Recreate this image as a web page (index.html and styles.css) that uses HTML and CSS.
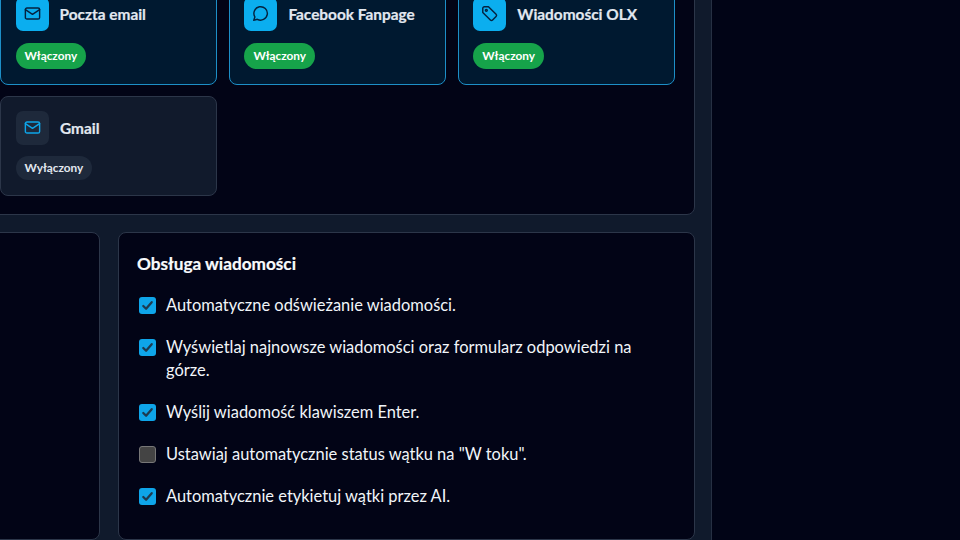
FILE: index.html
```html
<!DOCTYPE html>
<html lang="pl">
<head>
<meta charset="utf-8">
<title>Ustawienia</title>
<link rel="stylesheet" href="styles.css">
</head>
<body>
<main class="main">
  <section class="panel channels">
    <article class="card on">
      <div class="card-head">
        <span class="icon"><svg viewBox="0 0 24 24"><rect x="3" y="5" width="18" height="14" rx="2"/><path d="M3 7l9 6 9-6"/></svg></span>
        <h3>Poczta email</h3>
      </div>
      <span class="badge">Włączony</span>
    </article>
    <article class="card on">
      <div class="card-head">
        <span class="icon"><svg viewBox="0 0 24 24"><path d="M3.5 20.5l1.4-4.2A8.5 8.5 0 1 1 8 19.3z"/></svg></span>
        <h3>Facebook Fanpage</h3>
      </div>
      <span class="badge">Włączony</span>
    </article>
    <article class="card on">
      <div class="card-head">
        <span class="icon"><svg viewBox="0 0 24 24"><path d="M3.5 5.5a2 2 0 0 1 2-2h5.2l9.6 9.6a2 2 0 0 1 0 2.8l-4.4 4.4a2 2 0 0 1-2.8 0L3.5 10.7z"/><circle cx="8" cy="8" r="1.2"/></svg></span>
        <h3>Wiadomości OLX</h3>
      </div>
      <span class="badge">Włączony</span>
    </article>
    <article class="card off">
      <div class="card-head">
        <span class="icon"><svg viewBox="0 0 24 24"><rect x="3" y="5" width="18" height="14" rx="2"/><path d="M3 7l9 6 9-6"/></svg></span>
        <h3>Gmail</h3>
      </div>
      <span class="badge">Wyłączony</span>
    </article>
  </section>
  <div class="lower">
    <section class="panel side"></section>
    <section class="panel options">
      <h2>Obsługa wiadomości</h2>
      <ul class="opts">
        <li><span class="box checked"><svg viewBox="0 0 16 16"><path d="M3.5 8.5l3 3 6-7"/></svg></span><span>Automatyczne odświeżanie wiadomości.</span></li>
        <li><span class="box checked"><svg viewBox="0 0 16 16"><path d="M3.5 8.5l3 3 6-7"/></svg></span><span>Wyświetlaj najnowsze wiadomości oraz formularz odpowiedzi na górze.</span></li>
        <li><span class="box checked"><svg viewBox="0 0 16 16"><path d="M3.5 8.5l3 3 6-7"/></svg></span><span>Wyślij wiadomość klawiszem Enter.</span></li>
        <li><span class="box"></span><span>Ustawiaj automatycznie status wątku na "W toku".</span></li>
        <li><span class="box checked"><svg viewBox="0 0 16 16"><path d="M3.5 8.5l3 3 6-7"/></svg></span><span>Automatycznie etykietuj wątki przez AI.</span></li>
      </ul>
    </section>
  </div>
</main>
</body>
</html>
```

FILE: styles.css
```css
* { box-sizing: border-box; }
html, body { margin: 0; height: 540px; overflow: hidden; }
body {
  background: #010416;
  font-family: "Lato", "Noto Sans", sans-serif;
  color: #f1f5f9;
}
.main {
  width: 752px;
  height: 600px;
  margin: -60px 0 0 -40px;
  padding: 0 16.5px 0 21px;
  background: #101a2c;
  border-right: 1px solid #263043;
}
.panel {
  background: #020416;
  border: 1px solid #2c3649;
  border-radius: 8px;
}
.channels {
  display: grid;
  grid-template-columns: repeat(3, 217.3px);
  column-gap: 11.6px;
  row-gap: 11px;
  align-content: start;
  height: 274.5px;
  padding: 40px 0 0 18px;
}
.card {
  display: flex;
  flex-direction: column;
  align-items: flex-start;
  border-radius: 8px;
  padding: 14px 15px 15px;
}
.card.on { height: 104px; padding: 15px 15px 15px 14.5px; background: #001930; border: 1.5px solid #1d8fc7; }
.card.off { height: 100px; background: #111a2c; border: 1px solid #2c3649; }
.card-head { display: flex; align-items: center; gap: 11px; }
.card h3 { margin: 0; font-size: 15.4px; font-weight: 700; color: #e2e8f0; -webkit-text-stroke: 0.2px #e2e8f0; }
.icon {
  width: 33px; height: 33.5px; flex: none;
  display: flex; align-items: center; justify-content: center;
  border-radius: 7px;
}
.icon svg { width: 19px; height: 19px; fill: none; stroke-width: 1.8; stroke-linecap: round; stroke-linejoin: round; }
.on .icon { background: #0baeef; }
.on .icon svg { stroke: #04223f; }
.off .icon { background: #1e293b; }
.off .icon svg { stroke: #0ea5e9; }
.badge {
  display: inline-flex; align-items: center;
  font-size: 11.8px; font-weight: 700;
  border-radius: 13px;
}
.on .badge { height: 26px; padding: 0 9px; margin-top: 12px; background: #16a34a; color: #fff; }
.off .badge { height: 24px; padding: 0 8.5px; margin-top: 11px; background: #1e293b; color: #e2e8f0; }
.lower {
  display: grid;
  grid-template-columns: 1fr 577px;
  gap: 17.5px;
  margin-top: 17.5px;
  height: 308px;
}
.options { padding: 20px 19px 0 18.5px; }
.options h2 { margin: 0 0 20px; font-size: 17.2px; font-weight: 700; color: #f8fafc; line-height: 21px; -webkit-text-stroke: 0.2px #f8fafc; }
.opts { list-style: none; margin: 0; padding: 0; display: flex; flex-direction: column; gap: 19px; }
.opts li { display: flex; gap: 10px; font-size: 16.45px; line-height: 23px; color: #f1f5f9; padding-left: 2px; }
.box {
  width: 17px; height: 17px; flex: none; margin-top: 3px;
  border-radius: 3px; background: #444; border: 1px solid #777;
  display: flex; align-items: center; justify-content: center;
}
.box.checked { background: #0ea5e9; border: 0; }
.box svg { width: 15px; height: 15px; fill: none; stroke: #1e3a4f; stroke-width: 2.4; stroke-linecap: round; stroke-linejoin: round; }
```
